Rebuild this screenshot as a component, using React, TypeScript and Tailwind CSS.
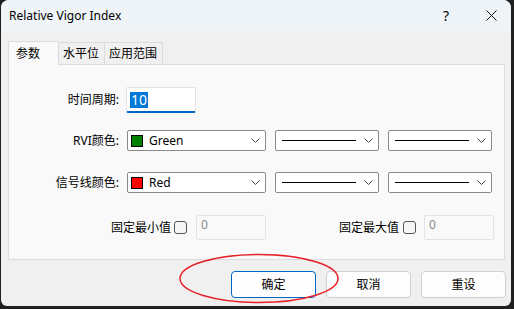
import React from 'react';

const font = { fontFamily: '"Noto Sans", "Noto Sans CJK SC", sans-serif' };

function Chevron() {
  return (
    <svg width="9" height="5" viewBox="0 0 9 5" className="shrink-0">
      <polyline points="0.5,0.5 4.5,4.5 8.5,0.5" fill="none" stroke="#444" strokeWidth="1" />
    </svg>
  );
}

function ColorCombo({ color, name }: { color: string; name: string }) {
  return (
    <div className="flex h-[21px] w-[139px] items-center rounded-[2px] border border-[#8a8a8a] bg-white pl-[3px] pr-[5px]">
      <span className="h-[12px] w-[12px] shrink-0 border border-black" style={{ backgroundColor: color }} />
      <span className="ml-[6px] flex-1 text-[12px] leading-none text-black">{name}</span>
      <Chevron />
    </div>
  );
}

function LineCombo() {
  return (
    <div className="flex h-[21px] w-[104px] items-center rounded-[2px] border border-[#8a8a8a] bg-white pl-[6px] pr-[5px]">
      <span className="h-px w-[74px] bg-black" />
      <span className="flex-1" />
      <Chevron />
    </div>
  );
}

function Checkbox() {
  return <span className="block h-[13px] w-[13px] shrink-0 rounded-[3px] border border-[#555] bg-[#f6f6f6]" />;
}

function DisabledInput() {
  return (
    <div className="h-[25px] w-[70px] rounded-[2px] border border-[#e3e3e3] bg-[#f9f9f9] pl-[4px] pt-[3px] text-[12px] leading-none text-[#8a8a8a]">
      0
    </div>
  );
}

function Btn({ label, focused = false }: { label: string; focused?: boolean }) {
  return (
    <button
      className={`flex h-[27px] w-[85px] items-center justify-center rounded-[4px] border bg-[#fdfdfd] text-[12px] text-black ${
        focused ? 'border-[#0067c0]' : 'border-[#d0d0d0]'
      }`}
    >
      {label}
    </button>
  );
}

export default function App() {
  return (
    <div className="h-[309px] w-[514px] overflow-hidden bg-[#202020] pl-px" style={font}>
      <div className="relative flex h-[306px] w-[510px] flex-col overflow-hidden rounded-t-[8px] rounded-b-[6px] bg-[#f0f0f0]">
        {/* title bar */}
        <div className="flex h-[31px] shrink-0 items-center bg-[#eef4f8] pl-[8px]">
          <span className="text-[12px] text-black">Relative Vigor Index</span>
          <span className="flex-1" />
          <span className="mr-[37px] text-[14px] text-black">?</span>
          <svg width="11" height="11" viewBox="0 0 11 11" className="mr-[14px]">
            <path d="M0.5 0.5 L10.5 10.5 M10.5 0.5 L0.5 10.5" stroke="#111" strokeWidth="1" />
          </svg>
        </div>

        {/* tabs */}
        <div className="ml-[7px] mt-[10px] flex h-[23px] items-end">
          <div className="relative z-10 -mb-px flex h-[24px] w-[51px] items-center rounded-t-[2px] border border-b-0 border-[#dcdcdc] bg-[#f9f9f9] pl-[7px] text-[12px] text-black">
            参数
          </div>
          <div className="flex h-[22px] w-[46px] items-center border border-b-0 border-l-0 border-[#dcdcdc] bg-[#f0f0f0] pl-[4px] text-[12px] text-black">
            水平位
          </div>
          <div className="flex h-[22px] w-[58px] items-center border border-b-0 border-l-0 border-[#dcdcdc] bg-[#f0f0f0] pl-[4px] text-[12px] text-black">
            应用范围
          </div>
        </div>

        {/* panel */}
        <div className="ml-[7px] flex h-[196px] w-[497px] flex-col border border-[#dcdcdc] bg-[#f9f9f9] text-[12px] text-black">
          <div className="mt-[22px] flex items-center">
            <span className="w-[110px] text-right">时间周期:</span>
            <div className="ml-[7px] flex h-[26px] w-[70px] items-center rounded-[2px] border border-[#e2e2e2] border-b-2 border-b-[#0067c0] bg-white pl-[3px]">
              <span className="bg-[#0078d7] px-px text-[14px] leading-[16px] text-white">10</span>
            </div>
          </div>

          <div className="mt-[17px] flex items-center">
            <span className="w-[110px] text-right">RVI颜色:</span>
            <div className="ml-[8px] flex gap-[9px]">
              <ColorCombo color="#008000" name="Green" />
              <LineCombo />
              <LineCombo />
            </div>
          </div>

          <div className="mt-[21px] flex items-center">
            <span className="w-[110px] text-right">信号线颜色:</span>
            <div className="ml-[8px] flex gap-[9px]">
              <ColorCombo color="#ff0000" name="Red" />
              <LineCombo />
              <LineCombo />
            </div>
          </div>

          <div className="mt-[22px] flex items-center">
            <span className="w-[162px] text-right">固定最小值</span>
            <span className="ml-[3px]">
              <Checkbox />
            </span>
            <span className="ml-[9px]">
              <DisabledInput />
            </span>
            <span className="w-[133px] text-right">固定最大值</span>
            <span className="ml-[4px]">
              <Checkbox />
            </span>
            <span className="ml-[8px]">
              <DisabledInput />
            </span>
          </div>
        </div>

        {/* buttons */}
        <div className="mt-[11px] flex justify-end gap-[10px] pr-[5px]">
          <Btn label="确定" focused />
          <Btn label="取消" />
          <Btn label="重设" />
        </div>

        {/* red annotation */}
        <svg className="pointer-events-none absolute left-[177px] top-[253px]" width="164" height="52" viewBox="0 0 164 52">
          <ellipse cx="81" cy="25.5" rx="79" ry="24" fill="none" stroke="#e8202a" strokeWidth="1.5" />
        </svg>
      </div>
    </div>
  );
}
